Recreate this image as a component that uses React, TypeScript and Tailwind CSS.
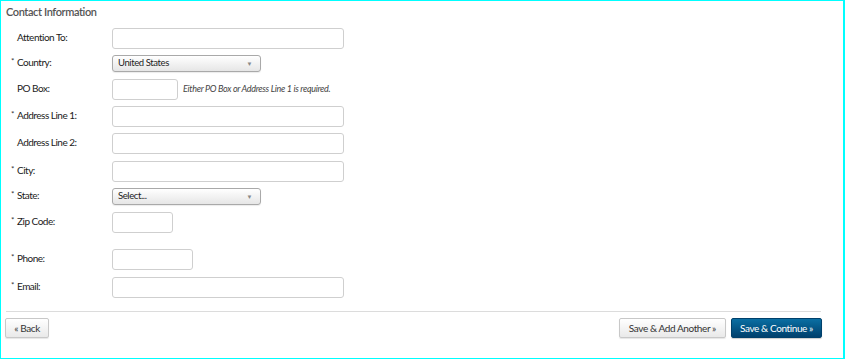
import React from 'react';

interface FieldRowProps {
  label: string;
  required?: boolean;
  mt: string;
  children: React.ReactNode;
}

const FieldRow: React.FC<FieldRowProps> = ({ label, required, mt, children }) => (
  <div className={`flex items-center h-[22px] ${mt}`}>
    <div className="w-[101px] shrink-0 flex items-center -mt-[1px] text-[10px] tracking-[-0.5px] text-[#1a1a1a]">
      <span className="w-[6px] text-[8px] leading-none -mt-[4px] text-[#333]">{required ? '*' : ''}</span>
      <span>{label}</span>
    </div>
    {children}
  </div>
);

const TextInput = ({ w }: { w: string }) => (
  <div className={`${w} h-[21px] border border-[#cfcfcf] rounded-[3px] bg-white`} />
);

const SelectBox = ({ value }: { value: string }) => (
  <div className="w-[149px] h-[17px] border border-[#a9a9a9] rounded-[3px] bg-gradient-to-b from-white to-[#e6e6e6] flex items-center justify-between pl-[5px] pr-[8px] text-[9.5px] tracking-[-0.4px] text-[#222] shadow-[0_1px_1px_rgba(0,0,0,0.08)]">
    <span>{value}</span>
    <span className="text-[6px] text-[#888]">▼</span>
  </div>
);

const btnLight =
  'h-[20px] border border-[#c8c8c8] rounded-[2px] bg-gradient-to-b from-white to-[#e9e9e9] text-[10px] tracking-[-0.4px] text-[#333] shadow-[0_1px_1px_rgba(0,0,0,0.1)]';

export default function App() {
  return (
    <div
      className="w-[845px] h-[359px] bg-white border border-[#00ffff] border-r-2 box-border"
      style={{ fontFamily: 'Lato, "Open Sans", sans-serif' }}
    >
      <div className="px-[4px] pt-[4px]">
        <h2 className="text-[11px] tracking-[-0.4px] font-semibold text-[#555] leading-[14px] pl-[1px]">Contact Information</h2>

        <div className="pl-[6px] pt-[8px]">
          <FieldRow label="Attention To:" mt="mt-0">
            <TextInput w="w-[232px]" />
          </FieldRow>
          <FieldRow label="Country:" required mt="mt-[3px]">
            <SelectBox value="United States" />
          </FieldRow>
          <FieldRow label="PO Box:" mt="mt-[4px]">
            <TextInput w="w-[66px]" />
            <span className="ml-[5px] text-[9px] tracking-[-0.3px] italic text-[#444]">Either PO Box or Address Line 1 is required.</span>
          </FieldRow>
          <FieldRow label="Address Line 1:" required mt="mt-[5px]">
            <TextInput w="w-[232px]" />
          </FieldRow>
          <FieldRow label="Address Line 2:" mt="mt-[5px]">
            <TextInput w="w-[232px]" />
          </FieldRow>
          <FieldRow label="City:" required mt="mt-[6px]">
            <TextInput w="w-[232px]" />
          </FieldRow>
          <FieldRow label="State:" required mt="mt-[3px]">
            <SelectBox value="Select..." />
          </FieldRow>
          <FieldRow label="Zip Code:" required mt="mt-[4px]">
            <TextInput w="w-[61px]" />
          </FieldRow>
          <FieldRow label="Phone:" required mt="mt-[15px]">
            <TextInput w="w-[81px]" />
          </FieldRow>
          <FieldRow label="Email:" required mt="mt-[6px]">
            <TextInput w="w-[232px]" />
          </FieldRow>
        </div>

        <div className="mt-[13px] ml-[1px] w-[815px] border-t border-[#dcdcdc]" />

        <div className="flex items-center justify-between w-[817px] mt-[6px]">
          <button className={`${btnLight} px-[7px] w-[44px]`}>« Back</button>
          <div className="flex items-center gap-[5px]">
            <button className={`${btnLight} px-[9px]`}>Save &amp; Add Another »</button>
            <button className="h-[20px] px-[8px] border border-[#00406b] rounded-[2px] bg-gradient-to-b from-[#0b6fa3] to-[#01406d] text-[10px] tracking-[-0.4px] text-white shadow-[0_1px_1px_rgba(0,0,0,0.2)]">
              Save &amp; Continue »
            </button>
          </div>
        </div>
      </div>
    </div>
  );
}
